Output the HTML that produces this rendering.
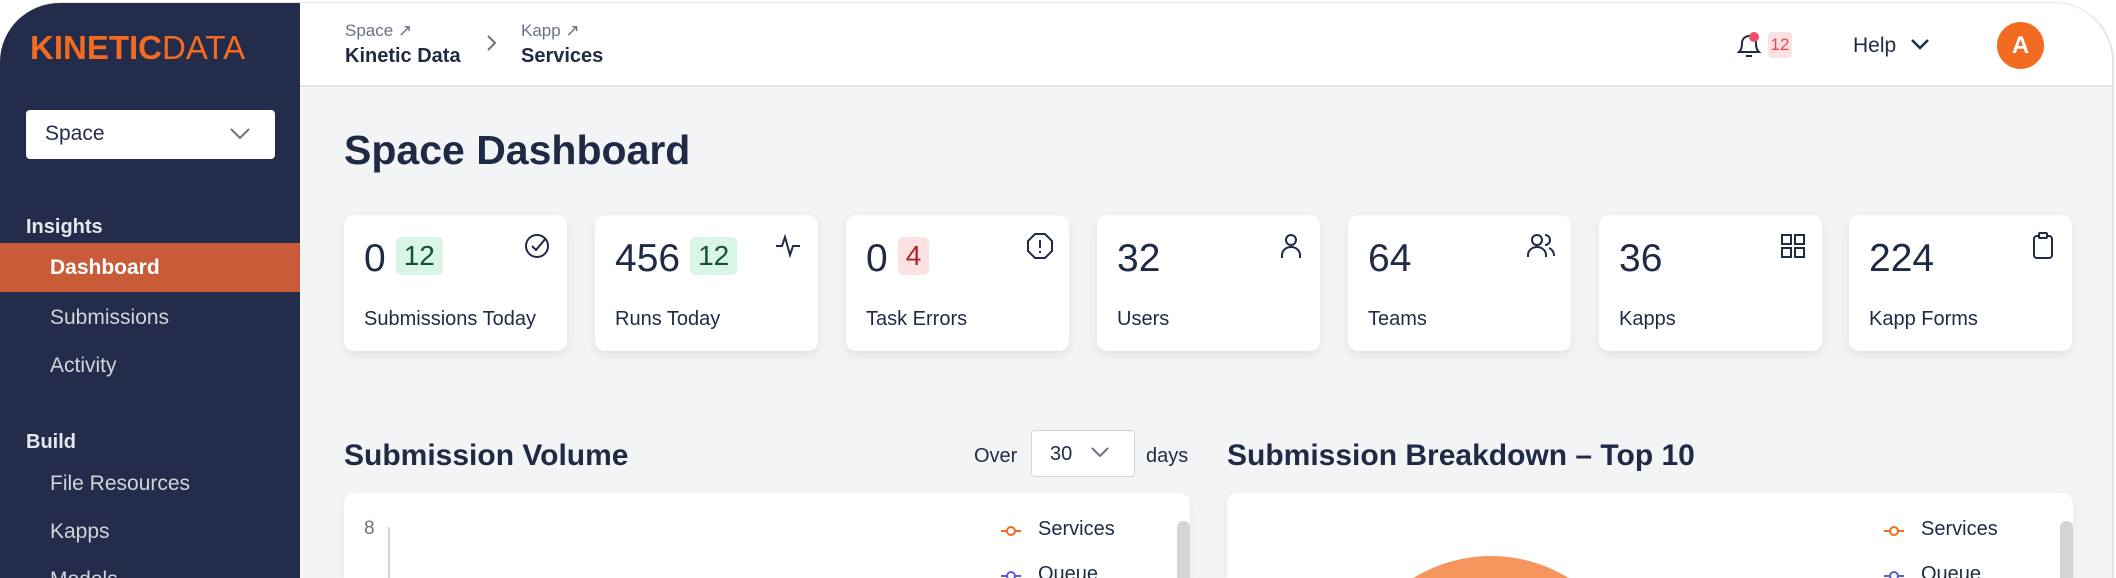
<!DOCTYPE html>
<html><head><meta charset="utf-8"><style>
*{margin:0;padding:0;box-sizing:border-box}
html,body{width:2116px;height:578px;overflow:hidden}
body{background:#fff;font-family:"Liberation Sans",sans-serif;color:#1f2a44;position:relative}
.frame{position:absolute;left:0;top:2px;width:2114px;height:576px;border-radius:60px 60px 0 0;overflow:hidden;background:#f3f4f6;border-top:1px solid #f3e6dc;border-right:2px solid #e4e4e6}
.side{position:absolute;left:0;top:0;width:300px;height:576px;background:#232c4b;overflow:hidden}
.a{position:absolute;white-space:nowrap}
.hdr{position:absolute;left:300px;top:0;right:0;height:84px;background:#fff;border-bottom:2px solid #e3e4e8}
.card{position:absolute;top:212px;width:223px;height:136px;background:#fff;border-radius:10px;box-shadow:0 4px 10px rgba(0,0,0,.08)}
.num{position:absolute;left:20px;top:22px;font-size:39px;color:#1f2a44}
.lbl{position:absolute;left:20px;top:93px;font-size:20px;color:#1f2a44}
.bdg{display:inline-block;font-size:28px;padding:3px 8px;border-radius:5px;margin-left:10px;vertical-align:6px}
.ic{position:absolute;right:14px;top:16px}
.panel{position:absolute;top:490px;height:88px;background:#fff;border-radius:10px 10px 0 0;box-shadow:0 2px 8px rgba(0,0,0,.06);overflow:hidden}
</style></head><body>
<div class="frame">
<div class="side">
 <div class="a" style="left:30px;top:26px;font-size:33px;color:#f26b21"><b>KINETIC</b><span style="font-weight:normal">DATA</span></div>
 <div class="a" style="left:26px;top:107px;width:249px;height:49px;background:#fff;border-radius:4px"></div>
 <div class="a" style="left:45px;top:119px;font-size:21px;color:#232c4b">Space</div>
 <svg class="a" style="left:229px;top:124px" width="22" height="14"><path d="M2 2l9 9 9-9" fill="none" stroke="#6b7280" stroke-width="2"/></svg>
 <div class="a" style="left:26px;top:213px;font-size:20px;color:#e5e7eb;font-weight:bold">Insights</div>
 <div class="a" style="left:0;top:240px;width:300px;height:49px;background:#c95b39"></div>
 <div class="a" style="left:50px;top:253px;font-size:21px;color:#fff;font-weight:bold">Dashboard</div>
 <div class="a" style="left:50px;top:303px;font-size:21px;color:#d1d5db">Submissions</div>
 <div class="a" style="left:50px;top:351px;font-size:21px;color:#d1d5db">Activity</div>
 <div class="a" style="left:26px;top:428px;font-size:20px;color:#e5e7eb;font-weight:bold">Build</div>
 <div class="a" style="left:50px;top:469px;font-size:21px;color:#d1d5db">File Resources</div>
 <div class="a" style="left:50px;top:517px;font-size:21px;color:#d1d5db">Kapps</div>
 <div class="a" style="left:50px;top:565px;font-size:21px;color:#d1d5db">Models</div>
</div>
<div class="hdr">
 <div class="a" style="left:45px;top:18px;font-size:17px;color:#6b7280">Space ↗</div>
 <div class="a" style="left:45px;top:42px;font-size:20px;color:#1f2a44;font-weight:bold">Kinetic Data</div>
 <svg class="a" style="left:186px;top:31px" width="12" height="18"><path d="M2 2l7 7-7 7" fill="none" stroke="#6b7280" stroke-width="2"/></svg>
 <div class="a" style="left:221px;top:18px;font-size:17px;color:#6b7280">Kapp ↗</div>
 <div class="a" style="left:221px;top:42px;font-size:20px;color:#1f2a44;font-weight:bold">Services</div>
 <svg class="a" style="left:1434px;top:27px" width="30" height="32"><path d="M5 22c2-2 3-4 3-9a7 7 0 0114 0c0 5 1 7 3 9z" fill="none" stroke="#1f2a44" stroke-width="2"/><path d="M12 26h6" stroke="#1f2a44" stroke-width="2"/><circle cx="20" cy="7" r="5" fill="#f0506e"/></svg>
 <div class="a" style="left:1468px;top:29px;width:24px;height:26px;background:#fde2e4;border-radius:4px;color:#e5484d;font-size:17px;text-align:center;line-height:26px">12</div>
 <div class="a" style="left:1553px;top:31px;font-size:21px;color:#1f2a44">Help</div>
 <svg class="a" style="left:1610px;top:35px" width="20" height="14"><path d="M2 2l8 8 8-8" fill="none" stroke="#1f2a44" stroke-width="2.5"/></svg>
 <div class="a" style="left:1697px;top:19px;width:47px;height:47px;border-radius:50%;background:#f26b21;color:#fff;font-size:24px;font-weight:bold;text-align:center;line-height:47px">A</div>
</div>
<div class="a" style="left:344px;top:124px;font-size:41px;font-weight:bold;color:#1f2a44">Space Dashboard</div>

<div class="card" style="left:344px"><div class="num">0<span class="bdg" style="background:#d9f5e6;color:#14532d">12</span></div><div class="lbl">Submissions Today</div>
<svg class="ic" width="30" height="30"><circle cx="14" cy="15" r="11" fill="none" stroke="#1f2a44" stroke-width="2"/><path d="M9 15l4 4 10-12" fill="none" stroke="#1f2a44" stroke-width="2"/></svg></div>
<div class="card" style="left:595px"><div class="num">456<span class="bdg" style="background:#d9f5e6;color:#14532d">12</span></div><div class="lbl">Runs Today</div>
<svg class="ic" width="30" height="30"><path d="M2 15h6l3-9 5 18 3-9h7" fill="none" stroke="#1f2a44" stroke-width="2"/></svg></div>
<div class="card" style="left:846px"><div class="num">0<span class="bdg" style="background:#fde2e4;color:#b4232b">4</span></div><div class="lbl">Task Errors</div>
<svg class="ic" width="30" height="30"><path d="M10 3h10l7 7v10l-7 7H10l-7-7V10z" fill="none" stroke="#1f2a44" stroke-width="2"/><path d="M15 9v8M15 20v2" stroke="#1f2a44" stroke-width="2"/></svg></div>
<div class="card" style="left:1097px"><div class="num">32</div><div class="lbl">Users</div>
<svg class="ic" width="30" height="30"><circle cx="15" cy="9" r="5" fill="none" stroke="#1f2a44" stroke-width="2"/><path d="M6 27v-3a9 8 0 0118 0v3" fill="none" stroke="#1f2a44" stroke-width="2"/></svg></div>
<div class="card" style="left:1348px"><div class="num">64</div><div class="lbl">Teams</div>
<svg class="ic" width="32" height="30"><circle cx="12" cy="9" r="5" fill="none" stroke="#1f2a44" stroke-width="2"/><path d="M3 26v-2a9 8 0 0118 0v2M20 4a5 5 0 010 10M24 17a8 8 0 015 8" fill="none" stroke="#1f2a44" stroke-width="2"/></svg></div>
<div class="card" style="left:1599px"><div class="num">36</div><div class="lbl">Kapps</div>
<svg class="ic" width="30" height="30"><g fill="none" stroke="#1f2a44" stroke-width="2"><rect x="4" y="4" width="9" height="9"/><rect x="17" y="4" width="9" height="9"/><rect x="4" y="17" width="9" height="9"/><rect x="17" y="17" width="9" height="9"/></g></svg></div>
<div class="card" style="left:1849px"><div class="num">224</div><div class="lbl">Kapp Forms</div>
<svg class="ic" width="30" height="30"><rect x="6" y="5" width="18" height="22" rx="3" fill="none" stroke="#1f2a44" stroke-width="2"/><rect x="11" y="2" width="8" height="5" rx="1" fill="#fff" stroke="#1f2a44" stroke-width="2"/></svg></div>

<div class="a" style="left:344px;top:436px;font-size:30px;font-weight:bold;color:#1f2a44">Submission Volume</div>
<div class="a" style="left:974px;top:442px;font-size:20px;color:#1f2a44">Over</div>
<div class="a" style="left:1031px;top:427px;width:104px;height:47px;background:#fff;border:1px solid #d1d5db;border-radius:4px"></div>
<div class="a" style="left:1050px;top:440px;font-size:20px;color:#1f2a44">30</div>
<svg class="a" style="left:1090px;top:443px" width="20" height="12"><path d="M2 2l8 8 8-8" fill="none" stroke="#6b7280" stroke-width="2"/></svg>
<div class="a" style="left:1146px;top:442px;font-size:20px;color:#1f2a44">days</div>
<div class="a" style="left:1227px;top:436px;font-size:30px;font-weight:bold;color:#1f2a44">Submission Breakdown – Top 10</div>

<div class="panel" style="left:344px;width:846px">
 <div class="a" style="left:20px;top:25px;font-size:19px;color:#6b7280">8</div>
 <div class="a" style="left:44px;top:34px;width:2px;height:60px;background:#d1d5db"></div>
 <svg class="a" style="left:655px;top:30px" width="30" height="58"><path d="M2 8h20" stroke-width="2" stroke="#f26b21"/><circle cx="12" cy="8" r="4" fill="#fff" stroke="#f26b21" stroke-width="2"/><path d="M2 53h20" stroke="#5b5bd6" stroke-width="2"/><circle cx="12" cy="53" r="4" fill="#fff" stroke="#5b5bd6" stroke-width="2"/></svg>
 <div class="a" style="left:694px;top:25px;font-size:20px;color:#1f2a44">Services</div>
 <div class="a" style="left:694px;top:70px;font-size:20px;color:#1f2a44">Queue</div>
 <div class="a" style="left:833px;top:28px;width:13px;height:70px;background:#d4d4d6;border-radius:6px"></div>
</div>
<div class="panel" style="left:1227px;width:846px">
 <div class="a" style="left:116px;top:63px;width:296px;height:296px;border-radius:50%;background:#f7955f"></div>
 <svg class="a" style="left:655px;top:30px" width="30" height="58"><path d="M2 8h20" stroke-width="2" stroke="#f26b21"/><circle cx="12" cy="8" r="4" fill="#fff" stroke="#f26b21" stroke-width="2"/><path d="M2 53h20" stroke="#5b5bd6" stroke-width="2"/><circle cx="12" cy="53" r="4" fill="#fff" stroke="#5b5bd6" stroke-width="2"/></svg>
 <div class="a" style="left:694px;top:25px;font-size:20px;color:#1f2a44">Services</div>
 <div class="a" style="left:694px;top:70px;font-size:20px;color:#1f2a44">Queue</div>
 <div class="a" style="left:833px;top:28px;width:13px;height:70px;background:#d4d4d6;border-radius:6px"></div>
</div>
</div>
</body></html>
